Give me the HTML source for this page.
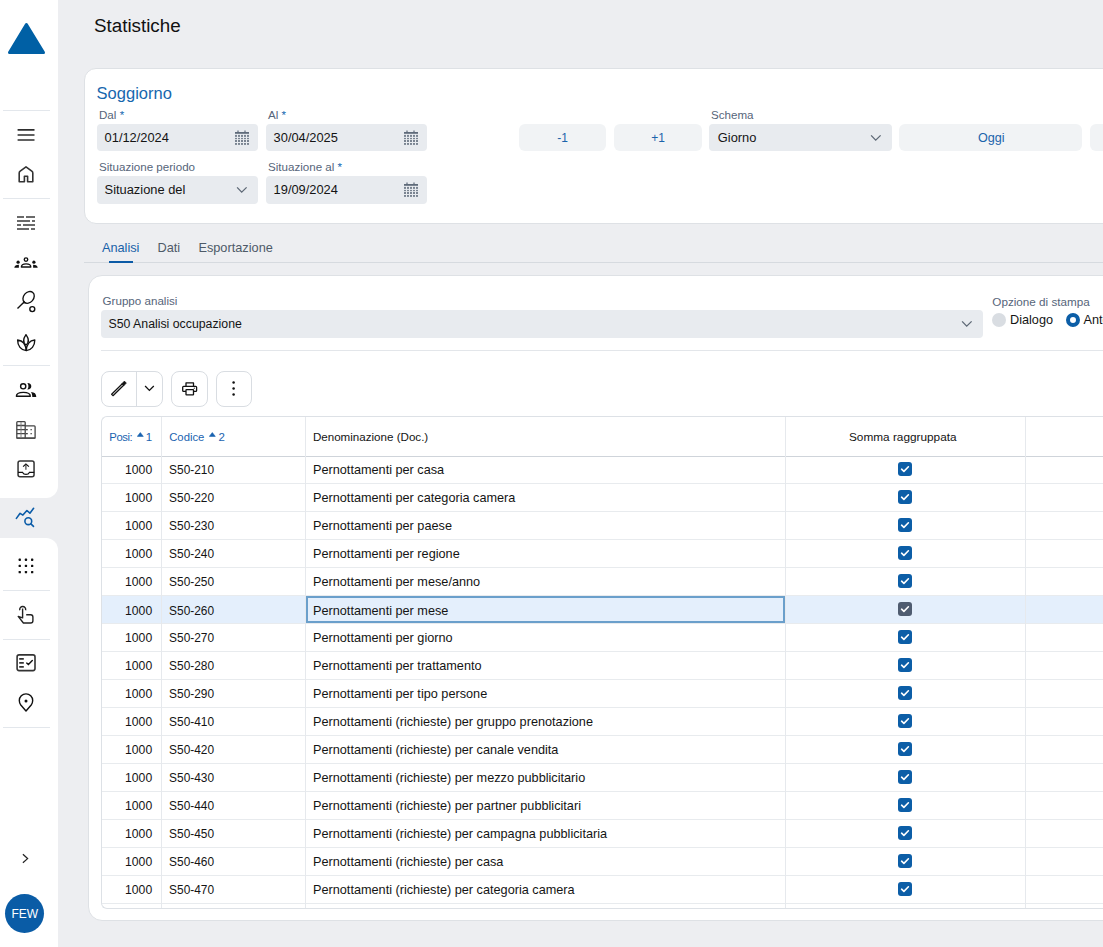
<!DOCTYPE html>
<html><head><meta charset="utf-8">
<style>
*{box-sizing:border-box;margin:0;padding:0}
html,body{width:1103px;height:947px;overflow:hidden}
body{background:#edeef1;font-family:"Liberation Sans",sans-serif;position:relative;color:#141414}
.abs{position:absolute}
.t{position:absolute;white-space:nowrap;line-height:1}
.t b{font-weight:normal;color:#1567b0}
.sb{position:absolute;left:0;width:58px;background:#fff}
.ic{position:absolute}
.card{position:absolute;background:#fff;border:1px solid #dee1e5}
.inp{position:absolute;background:#e8ebef;border-radius:4px}
.btn{position:absolute;background:#f1f3f5;border-radius:6px}
.tb{position:absolute;border:1px solid #d9dde2;border-radius:8px;background:#fff}
.grid{position:absolute;left:101px;top:416px;width:1100px;height:493px;border:1px solid #dde1e6;border-right:none;border-radius:6px 0 0 6px;overflow:hidden;background:#fff}
.cb{position:absolute;left:898px;width:14px;height:14px;border-radius:3px;background:#0c5ea7}
.cb svg{display:block}
</style></head><body>

<div class="sb" style="top:0;height:498px;border-bottom-right-radius:12px"></div>
<div class="sb" style="top:538px;height:409px;border-top-right-radius:12px"></div>
<svg class="ic" style="left:0;top:0" width="58" height="947" viewBox="0 0 58 947">
  <path d="M26.4 24.5 L43.5 52.6 L9.5 52.6 Z" fill="#0060a5" stroke="#0060a5" stroke-width="3" stroke-linejoin="round"/>
  <g fill="#e3e7ec">
  <rect x="3" y="110" width="47" height="1"/>
  <rect x="3" y="198" width="47" height="1"/>
  <rect x="3" y="365" width="47" height="1"/>
  <rect x="3" y="590" width="47" height="1"/>
  <rect x="3" y="639" width="47" height="1"/>
  <rect x="3" y="727" width="47" height="1"/>
  </g>
  <g fill="none" stroke="#2e2e2e" stroke-width="1.7">
    <path d="M17.6 129.9H34.5M17.6 135H34.5M17.6 140H34.5"/>
  </g>
  <path d="M19.2 181.7V173Q19.2 171.8 20.2 171.1L26 166.9L31.8 171.1Q32.8 171.8 32.8 173V181.7H27.6V176.3H24.4V181.7Z" fill="none" stroke="#333" stroke-width="1.6" stroke-linejoin="round"/>
  <g fill="#6a6a6a">
    <rect x="17" y="216" width="7" height="2"/><rect x="26" y="216" width="9" height="2"/>
    <rect x="17" y="220" width="13" height="2"/><rect x="32" y="220" width="3" height="2"/>
    <rect x="17" y="224" width="4" height="2"/><rect x="23" y="224" width="12" height="2"/>
    <rect x="17" y="228" width="12" height="2"/><rect x="31" y="228" width="4" height="2"/>
  </g>
  <!-- group -->
  <g fill="none" stroke="#111" stroke-width="1.4">
    <circle cx="26" cy="259.6" r="1.75"/>
    <path d="M21.4 267Q21.4 263.9 26.1 263.9Q30.8 263.9 30.8 267Z" stroke-linejoin="round"/>
  </g>
  <g fill="#111">
    <circle cx="18.1" cy="262.2" r="1.6"/>
    <path d="M14.3 267.8Q14.5 264.8 18.9 264.8V267.8Z"/>
    <circle cx="33.9" cy="262.2" r="1.6"/>
    <path d="M37.7 267.8Q37.5 264.8 33.1 264.8V267.8Z"/>
  </g>
  <!-- racket -->
  <g fill="none" stroke="#111" stroke-width="1.35">
    <ellipse cx="28.6" cy="297.4" rx="6.5" ry="5" transform="rotate(-50 28.6 297.4)"/>
    <path d="M17.5 308.5L23.6 302.5"/>
    <circle cx="32.3" cy="309.1" r="2.5"/>
  </g>
  <path d="M22.9 302.4L24 300.6L25.8 303.1L23.5 303.6Z" fill="#111"/>
  <!-- lotus -->
  <g fill="none" stroke="#111" stroke-width="1.35" stroke-linejoin="round">
    <path d="M26 334.6C23.2 338.6 22.6 342.4 26 345C29.4 342.4 28.8 338.6 26 334.6Z"/>
    <path d="M17.6 340C17.6 346 21 350.3 26.2 350.7C31.4 350.3 34.8 346 34.8 340C30.3 340.4 26.8 342.8 26.2 350.7C25.6 342.8 22 340.4 17.6 340Z"/>
  </g>
  <!-- people -->
  <g fill="none" stroke="#111" stroke-width="1.4">
    <circle cx="23.2" cy="386.3" r="2.6"/>
    <path d="M16.4 396.3Q16.4 392.4 23.3 392.4Q30.3 392.4 30.3 396.3Z" stroke-linejoin="round"/>
  </g>
  <g fill="#111">
    <path d="M27.3 383.1C30.2 383.1 31.3 384.8 31.3 386.35C31.3 387.9 30.2 389.6 27.3 389.6C28 388.8 28.4 387.6 28.4 386.35C28.4 385.1 28 383.9 27.3 383.1Z"/>
    <path d="M30.9 392.1C34.6 392.2 36.3 394 36.3 397H32.3C32.3 395 31.9 393.3 30.9 392.1Z"/>
  </g>
  <!-- building -->
  <g fill="none" stroke="#444" stroke-width="1.3" stroke-linejoin="round">
    <path d="M16.8 438.1V422.6Q16.8 421.7 17.7 421.7H24.4Q25.2 421.7 25.2 422.6V438.1Z"/>
    <path d="M25.2 425.9H34.2Q35.1 425.9 35.1 426.8V438.1H25.2"/>
    <path d="M16.8 425.5H25.2M16.8 429.6H25.2M16.8 433.6H25.2M16.8 438.1H35.1"/>
  </g>
  <path d="M21 422V438" stroke="#777" stroke-width="0.9"/>
  <g fill="#444">
    <rect x="25.9" y="429" width="1.9" height="1.3"/><rect x="25.9" y="433" width="1.9" height="1.3"/>
    <rect x="30.5" y="429" width="1.3" height="1.3"/><rect x="30.5" y="433" width="1.3" height="1.3"/>
  </g>
  <!-- inbox upload -->
  <g fill="none" stroke="#333" stroke-width="1.5" stroke-linejoin="round">
    <rect x="18.05" y="460.95" width="16" height="15.8" rx="2"/>
  </g>
  <g fill="none" stroke="#111" stroke-width="1.2">
    <path d="M18 472.4H22.6Q23.5 474.4 26 474.4Q28.5 474.4 29.4 472.4H34.2"/>
    <path d="M23.1 466.6L25.9 464L28.9 466.6"/>
  </g>
  <path d="M25.9 464.5V469.8" stroke="#444" stroke-width="1.2"/>
  <!-- analytics (selected) -->
  <g fill="none" stroke="#0b5ca8" stroke-width="1.6" stroke-linecap="round" stroke-linejoin="round">
    <path d="M16.4 518.4L20.1 513.3L22.9 515.1L26.9 510.5L29.9 513.2L33.6 508.3"/>
    <circle cx="28.3" cy="521.2" r="3.4"/>
    <path d="M30.9 523.9L33.5 526.4"/>
  </g>
  <!-- dots grid -->
  <g fill="#111">
    <rect x="18.6" y="558.6" width="2.3" height="2.3" rx="0.6"/><rect x="24.8" y="558.6" width="2.3" height="2.3" rx="0.6"/><rect x="31" y="558.6" width="2.3" height="2.3" rx="0.6"/>
    <rect x="18.6" y="564.8" width="2.3" height="2.3" rx="0.6"/><rect x="24.8" y="564.8" width="2.3" height="2.3" rx="0.6"/><rect x="31" y="564.8" width="2.3" height="2.3" rx="0.6"/>
    <rect x="18.6" y="571" width="2.3" height="2.3" rx="0.6"/><rect x="24.8" y="571" width="2.3" height="2.3" rx="0.6"/><rect x="31" y="571" width="2.3" height="2.3" rx="0.6"/>
  </g>
  <!-- hand -->
  <g fill="none" stroke="#222" stroke-width="1.4" stroke-linejoin="round">
    <path d="M19.8 610.2A3 3 0 1 1 25.6 610.2"/>
    <path d="M22.6 608.4V617.9L18.2 616.4L23.4 623H30.6Q32.9 623 32.9 620.7V616.9Q32.9 614.7 30.7 614.7H26.2"/>
  </g>
  <!-- checklist -->
  <g fill="none" stroke="#333" stroke-width="1.6">
    <rect x="17.1" y="654.9" width="17.9" height="15.7" rx="2"/>
    <path d="M19.2 658.9H23.8M19.2 662.9H23.8M19.2 666.9H23.8"/>
  </g>
  <path d="M26.7 663.1L28.4 664.6L32.3 660.6" fill="none" stroke="#111" stroke-width="1.4" stroke-linecap="round"/>
  <!-- pin -->
  <path d="M26 711L20.8 705Q19.3 703 19.3 700.6A6.7 6.7 0 0 1 32.7 700.6Q32.7 703 31.2 705Z" fill="none" stroke="#111" stroke-width="1.4" stroke-linejoin="round"/>
  <circle cx="26" cy="701" r="1.5" fill="#111"/>
  <!-- chevron right -->
  <path d="M22.9 854.3L27.6 858.6L22.9 862.8" fill="none" stroke="#222" stroke-width="1.25"/>
</svg>
<div class="abs" style="left:5px;top:894px;width:39px;height:39px;background:#0a5ca6;border-radius:50%"></div>
<div class="t" style="left:11.50px;top:908px;font-size:12px;color:#fff;width:26px;text-align:center">FEW</div>
<div class="t" style="left:94.00px;top:17px;font-size:18.8px;color:#111;">Statistiche</div>
<div class="card" style="left:84px;top:68px;width:1100px;height:156px;border-radius:12px"></div>
<div class="t" style="left:96.60px;top:85px;font-size:16.5px;color:#1767ae;">Soggiorno</div>
<div class="t" style="left:99.00px;top:109px;font-size:11.6px;color:#56657a;">Dal <b>*</b></div>
<div class="inp" style="left:97px;top:124px;width:161px;height:27px"></div>
<div class="t" style="left:104.60px;top:132px;font-size:12.85px;">01/12/2024</div>
<svg class="abs" style="left:234px;top:130px" width="16" height="17" viewBox="0 0 16 17"><g fill="#5f6b7a"><rect x="1" y="2" width="14" height="1.8"/><rect x="3.4" y="0.5" width="1.2" height="2"/><rect x="10.4" y="0.5" width="1.2" height="2"/><rect x="1.2" y="4.9" width="1.6" height="2"/><rect x="1.2" y="7.9" width="1.6" height="1.1"/><rect x="1.2" y="9.8" width="1.6" height="2.2"/><rect x="1.2" y="13" width="1.6" height="1.9"/><rect x="4.2" y="4.9" width="1.6" height="2"/><rect x="4.2" y="7.9" width="1.6" height="1.1"/><rect x="4.2" y="9.8" width="1.6" height="2.2"/><rect x="4.2" y="13" width="1.6" height="1.9"/><rect x="7.2" y="4.9" width="1.6" height="2"/><rect x="7.2" y="7.9" width="1.6" height="1.1"/><rect x="7.2" y="9.8" width="1.6" height="2.2"/><rect x="7.2" y="13" width="1.6" height="1.9"/><rect x="10.2" y="4.9" width="1.6" height="2"/><rect x="10.2" y="7.9" width="1.6" height="1.1"/><rect x="10.2" y="9.8" width="1.6" height="2.2"/><rect x="10.2" y="13" width="1.6" height="1.9"/><rect x="13.2" y="4.9" width="1.6" height="2"/><rect x="13.2" y="7.9" width="1.6" height="1.1"/><rect x="13.2" y="9.8" width="1.6" height="2.2"/><rect x="13.2" y="13" width="1.6" height="1.9"/></g></svg>
<div class="t" style="left:268.00px;top:109px;font-size:11.6px;color:#56657a;">Al <b>*</b></div>
<div class="inp" style="left:266px;top:124px;width:161px;height:27px"></div>
<div class="t" style="left:273.60px;top:132px;font-size:12.85px;">30/04/2025</div>
<svg class="abs" style="left:403px;top:130px" width="16" height="17" viewBox="0 0 16 17"><g fill="#5f6b7a"><rect x="1" y="2" width="14" height="1.8"/><rect x="3.4" y="0.5" width="1.2" height="2"/><rect x="10.4" y="0.5" width="1.2" height="2"/><rect x="1.2" y="4.9" width="1.6" height="2"/><rect x="1.2" y="7.9" width="1.6" height="1.1"/><rect x="1.2" y="9.8" width="1.6" height="2.2"/><rect x="1.2" y="13" width="1.6" height="1.9"/><rect x="4.2" y="4.9" width="1.6" height="2"/><rect x="4.2" y="7.9" width="1.6" height="1.1"/><rect x="4.2" y="9.8" width="1.6" height="2.2"/><rect x="4.2" y="13" width="1.6" height="1.9"/><rect x="7.2" y="4.9" width="1.6" height="2"/><rect x="7.2" y="7.9" width="1.6" height="1.1"/><rect x="7.2" y="9.8" width="1.6" height="2.2"/><rect x="7.2" y="13" width="1.6" height="1.9"/><rect x="10.2" y="4.9" width="1.6" height="2"/><rect x="10.2" y="7.9" width="1.6" height="1.1"/><rect x="10.2" y="9.8" width="1.6" height="2.2"/><rect x="10.2" y="13" width="1.6" height="1.9"/><rect x="13.2" y="4.9" width="1.6" height="2"/><rect x="13.2" y="7.9" width="1.6" height="1.1"/><rect x="13.2" y="9.8" width="1.6" height="2.2"/><rect x="13.2" y="13" width="1.6" height="1.9"/></g></svg>
<div class="t" style="left:99.00px;top:161px;font-size:11.6px;color:#56657a;">Situazione periodo</div>
<div class="inp" style="left:97px;top:176px;width:161px;height:28px"></div>
<div class="t" style="left:104.60px;top:184px;font-size:12.85px;">Situazione del</div>
<svg class="abs" style="left:236px;top:186px" width="12" height="8" viewBox="0 0 12 8"><path d="M1.1 1.4L5.7 6.2L10.6 1.4" fill="none" stroke="#5d6875" stroke-width="1.3"/></svg>
<div class="t" style="left:268.00px;top:161px;font-size:11.6px;color:#56657a;">Situazione al <b>*</b></div>
<div class="inp" style="left:266px;top:176px;width:161px;height:28px"></div>
<div class="t" style="left:273.60px;top:184px;font-size:12.85px;">19/09/2024</div>
<svg class="abs" style="left:403px;top:182px" width="16" height="17" viewBox="0 0 16 17"><g fill="#5f6b7a"><rect x="1" y="2" width="14" height="1.8"/><rect x="3.4" y="0.5" width="1.2" height="2"/><rect x="10.4" y="0.5" width="1.2" height="2"/><rect x="1.2" y="4.9" width="1.6" height="2"/><rect x="1.2" y="7.9" width="1.6" height="1.1"/><rect x="1.2" y="9.8" width="1.6" height="2.2"/><rect x="1.2" y="13" width="1.6" height="1.9"/><rect x="4.2" y="4.9" width="1.6" height="2"/><rect x="4.2" y="7.9" width="1.6" height="1.1"/><rect x="4.2" y="9.8" width="1.6" height="2.2"/><rect x="4.2" y="13" width="1.6" height="1.9"/><rect x="7.2" y="4.9" width="1.6" height="2"/><rect x="7.2" y="7.9" width="1.6" height="1.1"/><rect x="7.2" y="9.8" width="1.6" height="2.2"/><rect x="7.2" y="13" width="1.6" height="1.9"/><rect x="10.2" y="4.9" width="1.6" height="2"/><rect x="10.2" y="7.9" width="1.6" height="1.1"/><rect x="10.2" y="9.8" width="1.6" height="2.2"/><rect x="10.2" y="13" width="1.6" height="1.9"/><rect x="13.2" y="4.9" width="1.6" height="2"/><rect x="13.2" y="7.9" width="1.6" height="1.1"/><rect x="13.2" y="9.8" width="1.6" height="2.2"/><rect x="13.2" y="13" width="1.6" height="1.9"/></g></svg>
<div class="btn" style="left:519px;top:124px;width:87px;height:27px"></div>
<div class="t" style="left:557.30px;top:132px;font-size:12px;color:#1b63ab;">-1</div>
<div class="btn" style="left:614px;top:124px;width:88px;height:27px"></div>
<div class="t" style="left:651.20px;top:132px;font-size:12px;color:#1b63ab;">+1</div>
<div class="t" style="left:711.00px;top:109px;font-size:11.6px;color:#56657a;">Schema</div>
<div class="inp" style="left:709px;top:124px;width:183px;height:27px"></div>
<div class="t" style="left:717.80px;top:132px;font-size:12.85px;">Giorno</div>
<svg class="abs" style="left:870px;top:134px" width="12" height="8" viewBox="0 0 12 8"><path d="M1.1 1.4L5.7 6.2L10.6 1.4" fill="none" stroke="#5d6875" stroke-width="1.3"/></svg>
<div class="btn" style="left:899px;top:124px;width:183px;height:27px"></div>
<div class="t" style="left:978.00px;top:132px;font-size:12.6px;color:#1b63ab;">Oggi</div>
<div class="btn" style="left:1090px;top:124px;width:100px;height:27px"></div>
<div class="t" style="left:101.90px;top:242px;font-size:12.75px;color:#1761a8;">Analisi</div>
<div class="t" style="left:157.50px;top:242px;font-size:12.75px;color:#4e5a68;">Dati</div>
<div class="t" style="left:198.40px;top:242px;font-size:12.75px;color:#4e5a68;">Esportazione</div>
<div class="abs" style="left:84px;top:262px;width:1100px;height:1px;background:#d6dadf;"></div>
<div class="abs" style="left:109px;top:261px;width:24px;height:2px;background:#0b5aa6;"></div>
<div class="card" style="left:88px;top:275px;width:1100px;height:646px;border-radius:14px"></div>
<div class="t" style="left:102.60px;top:295px;font-size:11.6px;color:#56657a;">Gruppo analisi</div>
<div class="inp" style="left:101px;top:310px;width:882px;height:28px"></div>
<div class="t" style="left:108.50px;top:318px;font-size:12.3px;">S50 Analisi occupazione</div>
<svg class="abs" style="left:961px;top:320px" width="12" height="8" viewBox="0 0 12 8"><path d="M1.1 1.4L5.7 6.2L10.6 1.4" fill="none" stroke="#5d6875" stroke-width="1.3"/></svg>
<div class="t" style="left:992.30px;top:296px;font-size:11.7px;color:#56657a;">Opzione di stampa</div>
<div class="abs" style="left:992px;top:313px;width:14px;height:14px;background:#d9dde2;border-radius:50%"></div>
<div class="t" style="left:1010.00px;top:314px;font-size:12.7px;">Dialogo</div>
<div class="abs" style="left:1066px;top:313px;width:14px;height:14px;background:#fff;border-radius:50%;border:4px solid #0c5ea7;box-sizing:border-box"></div>
<div class="t" style="left:1083.50px;top:314px;font-size:12.7px;">Anteprima</div>
<div class="abs" style="left:101px;top:350px;width:1100px;height:1px;background:#e3e6ea;"></div>
<div class="tb" style="left:101px;top:371px;width:61.5px;height:36px"></div>
<div class="abs" style="left:136px;top:372px;width:1px;height:34px;background:#d9dde2;"></div>
<div class="tb" style="left:171px;top:371px;width:37px;height:36px"></div>
<div class="tb" style="left:216px;top:371px;width:36px;height:36px"></div>
<svg class="abs" style="left:108px;top:378px" width="50" height="22" viewBox="108 378 50 22">
  <path d="M112.97 395.68L123.67 385.18L122.33 383.82L111.63 394.32Z" fill="none" stroke="#111" stroke-width="1.25" stroke-linejoin="round"/>
  <path d="M124.00 385.52L126.40 383.12L124.40 381.08L122.00 383.48Z" fill="#111" stroke="#111" stroke-width="0.6" stroke-linejoin="round"/>
  <path d="M145.1 386L149.4 390.4L153.8 386" fill="none" stroke="#111" stroke-width="1.3"/>
</svg>
<svg class="abs" style="left:180px;top:380px" width="20" height="18" viewBox="180 380 20 18">
  <g fill="none" stroke="#111" stroke-width="1.3" stroke-linejoin="round">
    <path d="M186 386V382.9H193.5V386"/>
    <path d="M186 391.3H183.6Q182.7 391.3 182.7 390.4V387.2Q182.7 386.3 183.6 386.3H195.7Q196.6 386.3 196.6 387.2V390.4Q196.6 391.3 195.7 391.3H193.5"/>
    <rect x="186" y="389.6" width="7.5" height="5.3" rx="0.5"/>
  </g>
  <circle cx="194.3" cy="388.2" r="0.6" fill="#111"/>
</svg>
<svg class="abs" style="left:230px;top:379px" width="8" height="19" viewBox="230 379 8 19">
  <g fill="#111"><circle cx="233.6" cy="382.6" r="1.25"/><circle cx="233.6" cy="388.6" r="1.25"/><circle cx="233.6" cy="394.5" r="1.25"/></g>
</svg>
<div class="grid"></div>
<div class="abs" style="left:102px;top:417px;width:1001px;height:491px;overflow:hidden">
<div class="abs" style="left:0px;top:179px;width:1001px;height:27px;background:#e4effc;"></div>
<div class="abs" style="left:0px;top:39px;width:1001px;height:1px;background:#cfd4da;"></div>
<div class="abs" style="left:0px;top:66px;width:1001px;height:1px;background:#e8ebee;"></div>
<div class="abs" style="left:0px;top:94px;width:1001px;height:1px;background:#e8ebee;"></div>
<div class="abs" style="left:0px;top:122px;width:1001px;height:1px;background:#e8ebee;"></div>
<div class="abs" style="left:0px;top:150px;width:1001px;height:1px;background:#e8ebee;"></div>
<div class="abs" style="left:0px;top:178px;width:1001px;height:1px;background:#e8ebee;"></div>
<div class="abs" style="left:0px;top:206px;width:1001px;height:1px;background:#e8ebee;"></div>
<div class="abs" style="left:0px;top:234px;width:1001px;height:1px;background:#e8ebee;"></div>
<div class="abs" style="left:0px;top:262px;width:1001px;height:1px;background:#e8ebee;"></div>
<div class="abs" style="left:0px;top:290px;width:1001px;height:1px;background:#e8ebee;"></div>
<div class="abs" style="left:0px;top:318px;width:1001px;height:1px;background:#e8ebee;"></div>
<div class="abs" style="left:0px;top:346px;width:1001px;height:1px;background:#e8ebee;"></div>
<div class="abs" style="left:0px;top:374px;width:1001px;height:1px;background:#e8ebee;"></div>
<div class="abs" style="left:0px;top:402px;width:1001px;height:1px;background:#e8ebee;"></div>
<div class="abs" style="left:0px;top:430px;width:1001px;height:1px;background:#e8ebee;"></div>
<div class="abs" style="left:0px;top:458px;width:1001px;height:1px;background:#e8ebee;"></div>
<div class="abs" style="left:0px;top:486px;width:1001px;height:1px;background:#e8ebee;"></div>
<div class="abs" style="left:59px;top:0px;width:1px;height:491px;background:#e6e9ed;"></div>
<div class="abs" style="left:203px;top:0px;width:1px;height:491px;background:#e6e9ed;"></div>
<div class="abs" style="left:683px;top:0px;width:1px;height:491px;background:#e6e9ed;"></div>
<div class="abs" style="left:923px;top:0px;width:1px;height:491px;background:#e6e9ed;"></div>
<div class="t" style="left:7.30px;top:15px;font-size:11.3px;color:#1a63b0;letter-spacing:-0.45px">Posi:</div>
<svg class="abs" style="left:35px;top:14.5px" width="7" height="5" viewBox="0 0 7 5"><path d="M0.3 4.4L3.3 0.6L6.3 4.4Z" fill="#1a63b0" stroke="#1a63b0" stroke-width="0.6" stroke-linejoin="round"/></svg>
<div class="t" style="left:43.80px;top:15px;font-size:11.5px;color:#1a63b0;">1</div>
<div class="t" style="left:67.20px;top:15px;font-size:11.3px;color:#1a63b0;">Codice</div>
<svg class="abs" style="left:106.5px;top:14.5px" width="7" height="5" viewBox="0 0 7 5"><path d="M0.3 4.4L3.3 0.6L6.3 4.4Z" fill="#1a63b0" stroke="#1a63b0" stroke-width="0.6" stroke-linejoin="round"/></svg>
<div class="t" style="left:116.50px;top:15px;font-size:11.5px;color:#1a63b0;">2</div>
<div class="t" style="left:210.90px;top:14px;font-size:11.6px;">Denominazione (Doc.)</div>
<div class="t" style="left:747.00px;top:15px;font-size:11.8px;">Somma raggruppata</div>
<div class="t" style="left:0.00px;top:47px;font-size:12.2px;width:50.2px;text-align:right">1000</div>
<div class="t" style="left:67.10px;top:48px;font-size:11.9px;">S50-210</div>
<div class="t" style="left:211.00px;top:47px;font-size:12.7px;">Pernottamenti per casa</div>
<div class="cb" style="left:796px;top:45px;background:#0c5ea7"><svg width="14" height="14" viewBox="0 0 14 14"><path d="M3.6 7.2L5.9 9.4L10.4 4.8" fill="none" stroke="#fff" stroke-width="1.6" stroke-linecap="round" stroke-linejoin="round"/></svg></div>
<div class="t" style="left:0.00px;top:75px;font-size:12.2px;width:50.2px;text-align:right">1000</div>
<div class="t" style="left:67.10px;top:76px;font-size:11.9px;">S50-220</div>
<div class="t" style="left:211.00px;top:75px;font-size:12.7px;">Pernottamenti per categoria camera</div>
<div class="cb" style="left:796px;top:73px;background:#0c5ea7"><svg width="14" height="14" viewBox="0 0 14 14"><path d="M3.6 7.2L5.9 9.4L10.4 4.8" fill="none" stroke="#fff" stroke-width="1.6" stroke-linecap="round" stroke-linejoin="round"/></svg></div>
<div class="t" style="left:0.00px;top:103px;font-size:12.2px;width:50.2px;text-align:right">1000</div>
<div class="t" style="left:67.10px;top:104px;font-size:11.9px;">S50-230</div>
<div class="t" style="left:211.00px;top:103px;font-size:12.7px;">Pernottamenti per paese</div>
<div class="cb" style="left:796px;top:101px;background:#0c5ea7"><svg width="14" height="14" viewBox="0 0 14 14"><path d="M3.6 7.2L5.9 9.4L10.4 4.8" fill="none" stroke="#fff" stroke-width="1.6" stroke-linecap="round" stroke-linejoin="round"/></svg></div>
<div class="t" style="left:0.00px;top:131px;font-size:12.2px;width:50.2px;text-align:right">1000</div>
<div class="t" style="left:67.10px;top:132px;font-size:11.9px;">S50-240</div>
<div class="t" style="left:211.00px;top:131px;font-size:12.7px;">Pernottamenti per regione</div>
<div class="cb" style="left:796px;top:129px;background:#0c5ea7"><svg width="14" height="14" viewBox="0 0 14 14"><path d="M3.6 7.2L5.9 9.4L10.4 4.8" fill="none" stroke="#fff" stroke-width="1.6" stroke-linecap="round" stroke-linejoin="round"/></svg></div>
<div class="t" style="left:0.00px;top:159px;font-size:12.2px;width:50.2px;text-align:right">1000</div>
<div class="t" style="left:67.10px;top:160px;font-size:11.9px;">S50-250</div>
<div class="t" style="left:211.00px;top:159px;font-size:12.7px;">Pernottamenti per mese/anno</div>
<div class="cb" style="left:796px;top:157px;background:#0c5ea7"><svg width="14" height="14" viewBox="0 0 14 14"><path d="M3.6 7.2L5.9 9.4L10.4 4.8" fill="none" stroke="#fff" stroke-width="1.6" stroke-linecap="round" stroke-linejoin="round"/></svg></div>
<div class="t" style="left:0.00px;top:188px;font-size:12.2px;width:50.2px;text-align:right">1000</div>
<div class="t" style="left:67.10px;top:189px;font-size:11.9px;">S50-260</div>
<div class="t" style="left:211.00px;top:188px;font-size:12.7px;">Pernottamenti per mese</div>
<div class="cb" style="left:796px;top:185px;background:#4f5c70"><svg width="14" height="14" viewBox="0 0 14 14"><path d="M3.6 7.2L5.9 9.4L10.4 4.8" fill="none" stroke="#fff" stroke-width="1.6" stroke-linecap="round" stroke-linejoin="round"/></svg></div>
<div class="t" style="left:0.00px;top:215px;font-size:12.2px;width:50.2px;text-align:right">1000</div>
<div class="t" style="left:67.10px;top:216px;font-size:11.9px;">S50-270</div>
<div class="t" style="left:211.00px;top:215px;font-size:12.7px;">Pernottamenti per giorno</div>
<div class="cb" style="left:796px;top:213px;background:#0c5ea7"><svg width="14" height="14" viewBox="0 0 14 14"><path d="M3.6 7.2L5.9 9.4L10.4 4.8" fill="none" stroke="#fff" stroke-width="1.6" stroke-linecap="round" stroke-linejoin="round"/></svg></div>
<div class="t" style="left:0.00px;top:243px;font-size:12.2px;width:50.2px;text-align:right">1000</div>
<div class="t" style="left:67.10px;top:244px;font-size:11.9px;">S50-280</div>
<div class="t" style="left:211.00px;top:243px;font-size:12.7px;">Pernottamenti per trattamento</div>
<div class="cb" style="left:796px;top:241px;background:#0c5ea7"><svg width="14" height="14" viewBox="0 0 14 14"><path d="M3.6 7.2L5.9 9.4L10.4 4.8" fill="none" stroke="#fff" stroke-width="1.6" stroke-linecap="round" stroke-linejoin="round"/></svg></div>
<div class="t" style="left:0.00px;top:271px;font-size:12.2px;width:50.2px;text-align:right">1000</div>
<div class="t" style="left:67.10px;top:272px;font-size:11.9px;">S50-290</div>
<div class="t" style="left:211.00px;top:271px;font-size:12.7px;">Pernottamenti per tipo persone</div>
<div class="cb" style="left:796px;top:269px;background:#0c5ea7"><svg width="14" height="14" viewBox="0 0 14 14"><path d="M3.6 7.2L5.9 9.4L10.4 4.8" fill="none" stroke="#fff" stroke-width="1.6" stroke-linecap="round" stroke-linejoin="round"/></svg></div>
<div class="t" style="left:0.00px;top:299px;font-size:12.2px;width:50.2px;text-align:right">1000</div>
<div class="t" style="left:67.10px;top:300px;font-size:11.9px;">S50-410</div>
<div class="t" style="left:211.00px;top:299px;font-size:12.7px;">Pernottamenti (richieste) per gruppo prenotazione</div>
<div class="cb" style="left:796px;top:297px;background:#0c5ea7"><svg width="14" height="14" viewBox="0 0 14 14"><path d="M3.6 7.2L5.9 9.4L10.4 4.8" fill="none" stroke="#fff" stroke-width="1.6" stroke-linecap="round" stroke-linejoin="round"/></svg></div>
<div class="t" style="left:0.00px;top:327px;font-size:12.2px;width:50.2px;text-align:right">1000</div>
<div class="t" style="left:67.10px;top:328px;font-size:11.9px;">S50-420</div>
<div class="t" style="left:211.00px;top:327px;font-size:12.7px;">Pernottamenti (richieste) per canale vendita</div>
<div class="cb" style="left:796px;top:325px;background:#0c5ea7"><svg width="14" height="14" viewBox="0 0 14 14"><path d="M3.6 7.2L5.9 9.4L10.4 4.8" fill="none" stroke="#fff" stroke-width="1.6" stroke-linecap="round" stroke-linejoin="round"/></svg></div>
<div class="t" style="left:0.00px;top:355px;font-size:12.2px;width:50.2px;text-align:right">1000</div>
<div class="t" style="left:67.10px;top:356px;font-size:11.9px;">S50-430</div>
<div class="t" style="left:211.00px;top:355px;font-size:12.7px;">Pernottamenti (richieste) per mezzo pubblicitario</div>
<div class="cb" style="left:796px;top:353px;background:#0c5ea7"><svg width="14" height="14" viewBox="0 0 14 14"><path d="M3.6 7.2L5.9 9.4L10.4 4.8" fill="none" stroke="#fff" stroke-width="1.6" stroke-linecap="round" stroke-linejoin="round"/></svg></div>
<div class="t" style="left:0.00px;top:383px;font-size:12.2px;width:50.2px;text-align:right">1000</div>
<div class="t" style="left:67.10px;top:384px;font-size:11.9px;">S50-440</div>
<div class="t" style="left:211.00px;top:383px;font-size:12.7px;">Pernottamenti (richieste) per partner pubblicitari</div>
<div class="cb" style="left:796px;top:381px;background:#0c5ea7"><svg width="14" height="14" viewBox="0 0 14 14"><path d="M3.6 7.2L5.9 9.4L10.4 4.8" fill="none" stroke="#fff" stroke-width="1.6" stroke-linecap="round" stroke-linejoin="round"/></svg></div>
<div class="t" style="left:0.00px;top:411px;font-size:12.2px;width:50.2px;text-align:right">1000</div>
<div class="t" style="left:67.10px;top:412px;font-size:11.9px;">S50-450</div>
<div class="t" style="left:211.00px;top:411px;font-size:12.7px;">Pernottamenti (richieste) per campagna pubblicitaria</div>
<div class="cb" style="left:796px;top:409px;background:#0c5ea7"><svg width="14" height="14" viewBox="0 0 14 14"><path d="M3.6 7.2L5.9 9.4L10.4 4.8" fill="none" stroke="#fff" stroke-width="1.6" stroke-linecap="round" stroke-linejoin="round"/></svg></div>
<div class="t" style="left:0.00px;top:439px;font-size:12.2px;width:50.2px;text-align:right">1000</div>
<div class="t" style="left:67.10px;top:440px;font-size:11.9px;">S50-460</div>
<div class="t" style="left:211.00px;top:439px;font-size:12.7px;">Pernottamenti (richieste) per casa</div>
<div class="cb" style="left:796px;top:437px;background:#0c5ea7"><svg width="14" height="14" viewBox="0 0 14 14"><path d="M3.6 7.2L5.9 9.4L10.4 4.8" fill="none" stroke="#fff" stroke-width="1.6" stroke-linecap="round" stroke-linejoin="round"/></svg></div>
<div class="t" style="left:0.00px;top:467px;font-size:12.2px;width:50.2px;text-align:right">1000</div>
<div class="t" style="left:67.10px;top:468px;font-size:11.9px;">S50-470</div>
<div class="t" style="left:211.00px;top:467px;font-size:12.7px;">Pernottamenti (richieste) per categoria camera</div>
<div class="cb" style="left:796px;top:465px;background:#0c5ea7"><svg width="14" height="14" viewBox="0 0 14 14"><path d="M3.6 7.2L5.9 9.4L10.4 4.8" fill="none" stroke="#fff" stroke-width="1.6" stroke-linecap="round" stroke-linejoin="round"/></svg></div>
<div class="abs" style="left:204px;top:179px;width:479px;height:27px;background:transparent;border:2px solid #6a9fcb"></div>
</div>
</body></html>
